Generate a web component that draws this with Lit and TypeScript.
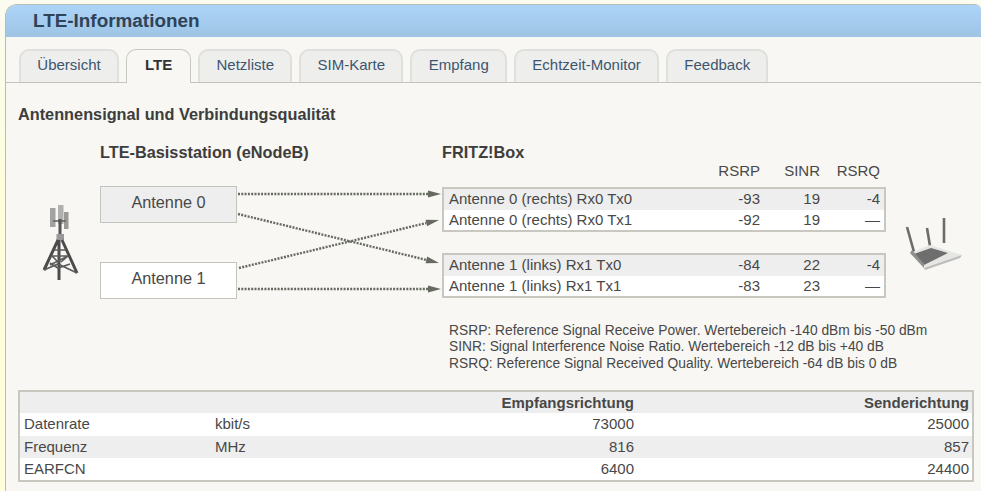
import { LitElement, html, css, svg } from "lit";
import { customElement } from "lit/decorators.js";

const TABS = ["Übersicht", "LTE", "Netzliste", "SIM-Karte", "Empfang", "Echtzeit-Monitor", "Feedback"];
const GROUPS = [
  [["Antenne 0 (rechts) Rx0 Tx0", "-93", "19", "-4"], ["Antenne 0 (rechts) Rx0 Tx1", "-92", "19", "—"]],
  [["Antenne 1 (links) Rx1 Tx0", "-84", "22", "-4"], ["Antenne 1 (links) Rx1 Tx1", "-83", "23", "—"]],
];
const BOTTOM = [
  ["Datenrate", "kbit/s", "73000", "25000"],
  ["Frequenz", "MHz", "816", "857"],
  ["EARFCN", "", "6400", "24400"],
];

@customElement("app-root")
export class AppRoot extends LitElement {
  static styles = css`
    :host { display: block; height: 491px; overflow: hidden; background: linear-gradient(#fbfbf0, #ffffdc 40%); font-family: "Liberation Sans", Arial, sans-serif; color: #484848; font-size: 15px; }
    .card { margin: 4px 0 0 5px; height: 487px; box-sizing: border-box; border: 1px solid #b5bdb0; border-right: 0; border-bottom: 0; border-radius: 12px 6px 0 0; background: #f8f7f3; overflow: hidden; }
    .head { height: 32px; padding-left: 27px; background: linear-gradient(#acd4f8, #9fc4e4); font: bold 18.9px/32px "Liberation Sans", Arial, sans-serif; color: #2f4358; }
    .tabs { display: flex; gap: 7px; margin-top: 12px; padding-left: 13px; height: 33px; border-bottom: 1px solid #c4c4be; }
    .tab { box-sizing: border-box; height: 33px; padding: 0 16.3px; line-height: 28px; border: 2px solid #dfdfdb; border-bottom: 0; border-radius: 10px 10px 0 0; background: #eeeeec; color: #3c5670; }
    .tab.active { height: 34px; background: #f8f7f3; border: 1px solid #c8c8c2; border-bottom: 0; color: #333; font-weight: bold; padding: 0 18px; line-height: 29px; position: relative; z-index: 1; }
    .section { margin: 22px 0 0 12px; font-weight: bold; font-size: 16.3px; line-height: 18px; color: #3d3d3d; }
    .diagram { display: grid; grid-template-columns: 82px 137px 205px 444px 1fr; margin: 20px 0 0 12px; }
    .h { font-weight: bold; font-size: 16.3px; line-height: 18px; color: #3d3d3d; }
    .h.a { grid-column: 2 / 4; }
    .h.b { grid-column: 4 / 6; }
    .tower { grid-column: 1; width: 82px; height: 115px; margin-top: 25px; }
    .ants { grid-column: 2; display: flex; flex-direction: column; gap: 39px; padding-top: 25px; }
    .ant { box-sizing: border-box; height: 37px; line-height: 31px; text-align: center; border: 1px solid #c4c4be; background: #fff; font-size: 16.3px; }
    .ant.g { background: #eeeeee; }
    .arrows { grid-column: 3; display: block; margin-top: 25px; width: 205px; height: 115px; }
    .tables { grid-column: 4; }
    .row { display: grid; grid-template-columns: 1fr 60px 60px 60px; padding-right: 4px; line-height: 20.5px; }
    .row > :not(:first-child) { text-align: right; }
    .row > :first-child { padding-left: 5px; }
    .hdr { margin: 2px 2px 8px; padding-right: 4px; height: 16px; line-height: 16px; display: grid; grid-template-columns: 1fr 60px 60px 60px; }
    .hdr > span { text-align: right; }
    .group { border: 2px solid #c8c8c0; background: #fff; }
    .group + .group { margin-top: 21px; }
    .row.g { background: #eeeeee; }
    .router { grid-column: 5; width: 88px; height: 115px; margin-top: 25px; }
    .legend { grid-column: 4 / 6; margin: 22px 0 0 7px; font-size: 13.8px; line-height: 16.4px; white-space: nowrap; }
    .bottom { margin: 18px 7px 0 12px; border: 2px solid #c8c8c0; background: #fff; }
    .brow { display: grid; grid-template-columns: 1fr 190px 335px; padding: 0 3px 0 4px; line-height: 22.3px; height: 22.3px; }
    .brow.g { background: #eeeeee; }
    .brow.t { font-weight: bold; height: 21px; line-height: 21px; }
    .first { display: flex; }
    .first span:first-child { width: 191px; flex: none; }
    .right { text-align: right; }
  `;

  private towerIcon() {
    return svg`<svg class="tower" viewBox="0 0 82 115" aria-hidden="true">
      <defs><filter id="b1"><feGaussianBlur stdDeviation="0.6"/></filter></defs>
      <g filter="url(#b1)" transform="translate(-18,-186)">
        <rect x="50" y="208" width="5.5" height="19" fill="#a2a2a0"/>
        <rect x="58" y="205" width="5.5" height="19" fill="#b0b0ae"/>
        <rect x="64" y="212" width="4.5" height="17" fill="#9a9a98"/>
        <path d="M53 221H66" stroke="#666" stroke-width="1.6"/>
        <path d="M60 219V237" stroke="#555" stroke-width="3"/>
        <rect x="56.5" y="234" width="7.5" height="6" fill="#999"/>
        <path d="M58 240L44 270M62 240L77 273M59 240V280" stroke="#4c4c4c" stroke-width="3" fill="none"/>
        <path d="M54 250L66 250M52 256L68 256L50 265M52 256L58 262M68 256L61 262M50 263L58 268L70 264M44 270L58 264L77 273" stroke="#5c5c5c" stroke-width="1.6" fill="none"/>
      </g>
    </svg>`;
  }

  private routerIcon() {
    return svg`<svg class="router" viewBox="0 0 88 115" aria-hidden="true">
      <defs><filter id="b2"><feGaussianBlur stdDeviation="0.6"/></filter></defs>
      <g filter="url(#b2)" transform="translate(-886,-186)">
        <path d="M907 227L914 252M927 228L930 246M944 218V243" stroke="#6c6c6c" stroke-width="2.6" fill="none"/>
        <path d="M910 253L930 245L962 255L924 268Z" fill="#e6e6e4"/>
        <path d="M914 254L931 248L948 253L924 265Z" fill="#6e6e6e"/>
        <path d="M910 253L924 268L924 264L912 250Z" fill="#8e8e8e"/>
        <path d="M924 268L962 255L960 258L925 270Z" fill="#bdbdbd"/>
      </g>
    </svg>`;
  }

  private arrowsGfx() {
    const line = (x1: number, y1: number, x2: number, y2: number) => {
      const len = Math.hypot(x2 - x1, y2 - y1);
      const ux = (x2 - x1) / len, uy = (y2 - y1) / len;
      const bx = x2 - ux * 13, by = y2 - uy * 13;
      const hx = -uy * 3.4, hy = ux * 3.4;
      return svg`<line x1=${x1} y1=${y1} x2=${bx} y2=${by} stroke="#666a60" stroke-width="2.4" stroke-dasharray="2 1.3"/>
        <polygon points="${x2},${y2} ${bx + hx},${by + hy} ${bx - hx},${by - hy}" fill="#666a60"/>`;
    };
    return svg`<svg class="arrows" viewBox="0 0 205 115" aria-hidden="true">
      ${line(1, 8, 204, 8)}
      ${line(1, 28, 202, 77)}
      ${line(2, 82, 202, 34)}
      ${line(1, 103, 204, 103)}
    </svg>`;
  }

  render() {
    return html`<div class="card">
      <div class="head">LTE-Informationen</div>
      <div class="tabs">
        ${TABS.map((t, i) => html`<div class="tab ${i === 1 ? "active" : ""}">${t}</div>`)}
      </div>
      <div class="section">Antennensignal und Verbindungsqualität</div>
      <div class="diagram">
        <div class="h a">LTE-Basisstation (eNodeB)</div>
        <div class="h b">FRITZ!Box</div>
        ${this.towerIcon()}
        <div class="ants">
          <div class="ant g">Antenne 0</div>
          <div class="ant">Antenne 1</div>
        </div>
        ${this.arrowsGfx()}
        <div class="tables">
          <div class="hdr"><span></span><span>RSRP</span><span>SINR</span><span>RSRQ</span></div>
          ${GROUPS.map((g) => html`<div class="group">
            ${g.map((r, i) => html`<div class="row ${i === 0 ? "g" : ""}">${r.map((c) => html`<div>${c}</div>`)}</div>`)}
          </div>`)}
        </div>
        ${this.routerIcon()}
        <div class="legend" style="grid-row:3">
          RSRP: Reference Signal Receive Power. Wertebereich -140 dBm bis -50 dBm<br>
          SINR: Signal Interference Noise Ratio. Wertebereich -12 dB bis +40 dB<br>
          RSRQ: Reference Signal Received Quality. Wertebereich -64 dB bis 0 dB
        </div>
      </div>
      <div class="bottom">
        <div class="brow t g"><div></div><div class="right">Empfangsrichtung</div><div class="right">Senderichtung</div></div>
        ${BOTTOM.map((r, i) => html`<div class="brow ${i === 1 ? "g" : ""}">
          <div class="first"><span>${r[0]}</span><span>${r[1]}</span></div>
          <div class="right">${r[2]}</div><div class="right">${r[3]}</div>
        </div>`)}
      </div>
    </div>`;
  }
}
